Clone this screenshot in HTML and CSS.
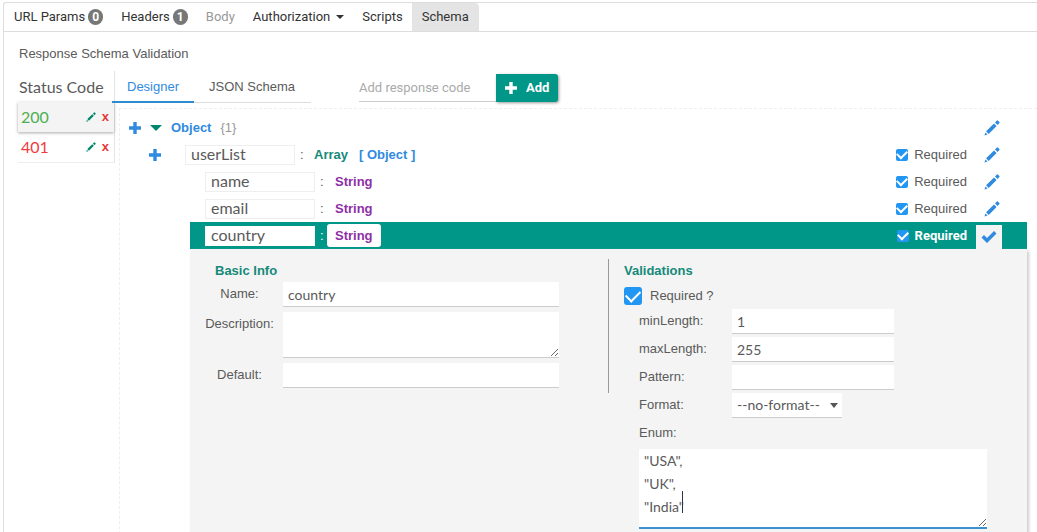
FILE: index.html
```html
<!DOCTYPE html>
<html lang="en">
<head>
<meta charset="utf-8">
<title>Response Schema Validation</title>
<link rel="stylesheet" href="styles.css">
</head>
<body>
<svg class="defs" width="0" height="0" aria-hidden="true">
  <symbol id="pencil" viewBox="0 0 16 16"><path d="M0.5 15.5 1.4 12.4 3.6 14.6ZM2.1 11.3 10 3.4 12.6 6 4.7 13.9ZM11 2.4 12.9.6Q13.4 0 14.1.7L15.3 1.9Q16 2.6 15.4 3.1L13.6 5Z"/></symbol>
  <symbol id="plus" viewBox="0 0 12 12"><path d="M4.3 0h3.4v4.3H12v3.4H7.7V12H4.3V7.7H0V4.3h4.3z"/></symbol>
  <symbol id="check" viewBox="0 0 16 14"><path d="M0.5 7.5 3 5 6 8 13 1 15.5 3.4 6 13z"/></symbol>
</svg>
<main class="panel">
  <nav class="tabs">
    <button class="tab">URL Params <span class="badge">0</span></button>
    <button class="tab">Headers <span class="badge">1</span></button>
    <button class="tab muted">Body</button>
    <button class="tab">Authorization <span class="caret"></span></button>
    <button class="tab">Scripts</button>
    <button class="tab active">Schema</button>
  </nav>
  <h1 class="title">Response Schema Validation</h1>
  <div class="columns">
    <aside class="codes">
      <h2 class="codes-title">Status Code</h2>
      <div class="code ok selected"><span class="num">200</span><button class="mini" aria-label="Edit 200"><svg class="icon-s"><use href="#pencil"/></svg></button><button class="mini del" aria-label="Delete 200">x</button></div>
      <div class="code bad"><span class="num">401</span><button class="mini" aria-label="Edit 401"><svg class="icon-s"><use href="#pencil"/></svg></button><button class="mini del" aria-label="Delete 401">x</button></div>
    </aside>
    <section class="content">
      <div class="toolbar">
        <button class="view current">Designer</button>
        <button class="view">JSON Schema</button>
        <form class="add-form">
          <input class="add-input" type="text" placeholder="Add response code" aria-label="Add response code">
          <button class="add" type="button"><svg class="icon-p"><use href="#plus"/></svg>Add</button>
        </form>
      </div>
      <div class="tree">
        <div class="row root">
          <button class="plain" aria-label="Add property"><svg class="icon-p"><use href="#plus"/></svg></button>
          <button class="plain" aria-label="Collapse"><span class="arrow"></span></button>
          <span class="type blue">Object</span><span class="count">{1}</span>
          <button class="edit" aria-label="Edit root"><svg class="icon"><use href="#pencil"/></svg></button>
        </div>
        <div class="row list">
          <button class="plain" aria-label="Add item property"><svg class="icon-p"><use href="#plus"/></svg></button>
          <input class="key" value="userList" aria-label="Property name"><span class="colon">:</span>
          <span class="type green">Array</span><span class="type blue items">[ Object ]</span>
          <label class="req"><input class="tick" type="checkbox" checked>Required</label>
          <button class="edit" aria-label="Edit userList"><svg class="icon"><use href="#pencil"/></svg></button>
        </div>
        <div class="row leaf">
          <input class="key" value="name" aria-label="Property name"><span class="colon">:</span>
          <span class="type purple">String</span>
          <label class="req"><input class="tick" type="checkbox" checked>Required</label>
          <button class="edit" aria-label="Edit name"><svg class="icon"><use href="#pencil"/></svg></button>
        </div>
        <div class="row leaf">
          <input class="key" value="email" aria-label="Property name"><span class="colon">:</span>
          <span class="type purple">String</span>
          <label class="req"><input class="tick" type="checkbox" checked>Required</label>
          <button class="edit" aria-label="Edit email"><svg class="icon"><use href="#pencil"/></svg></button>
        </div>
        <div class="row leaf open">
          <input class="key" value="country" aria-label="Property name"><span class="colon">:</span>
          <span class="type purple">String</span>
          <label class="req"><input class="tick" type="checkbox" checked>Required</label>
          <button class="edit done" aria-label="Done"><svg class="icon"><use href="#check"/></svg></button>
        </div>
        <div class="details">
          <section class="basic">
            <h3 class="heading">Basic Info</h3>
            <label class="field"><span class="label">Name:</span><input class="box" value="country"></label>
            <label class="field"><span class="label">Description:</span><textarea class="box area"></textarea></label>
            <label class="field"><span class="label">Default:</span><input class="box"></label>
          </section>
          <section class="rules">
            <h3 class="heading">Validations</h3>
            <label class="required"><input class="tick big" type="checkbox" checked>Required ?</label>
            <label class="rule"><span class="name">minLength:</span><input class="box" value="1"></label>
            <label class="rule"><span class="name">maxLength:</span><input class="box" value="255"></label>
            <label class="rule"><span class="name">Pattern:</span><input class="box"></label>
            <label class="rule format"><span class="name">Format:</span><select class="box select"><option>--no-format--</option></select></label>
            <label class="rule" for="enum"><span class="name">Enum:</span></label>
            <div class="enum-wrap">
              <textarea class="box enum" id="enum">"USA",
"UK",
"India"</textarea>
              <span class="cursor"></span>
            </div>
          </section>
        </div>
      </div>
    </section>
  </div>
</main>
</body>
</html>
```

FILE: styles.css
```css
* { box-sizing: border-box; }
body { margin: 0; background: #fff; color: #5a5a5a; font: 13px/18px "Liberation Sans", Arial, sans-serif; overflow: hidden; }
button, input, textarea, select { font: inherit; color: inherit; margin: 0; border: 0; padding: 0; background: none; border-radius: 0; outline: 0; }
button { cursor: pointer; }
h1, h2, h3 { margin: 0; font: inherit; }
svg { display: block; fill: currentColor; }
.defs { position: absolute; }
.panel { margin: 2px 0 0 3px; border: 1px solid #ddd; border-right: 0; border-bottom: 0; border-top-left-radius: 3px; }
.tabs { display: flex; height: 29px; padding-left: 1px; border-bottom: 1px solid #ddd; color: #333; font-family: Roboto, sans-serif; }
.tab { display: flex; align-items: center; gap: 3px; padding: 0 9px; }
.muted { color: #999; }
.active { padding: 0 10px; background: #e4e4e4; border-top-right-radius: 4px; }
.badge { width: 15px; height: 16px; border-radius: 8px; background: #777; color: #fff; font-weight: bold; font-size: 12px; line-height: 16px; }
.caret { border: 4px solid transparent; border-top-color: #333; border-bottom: 0; margin-left: 3px; }
.title { padding: 13px 15px 8px; }
.columns { display: flex; padding-left: 14px; }
.codes { width: 97px; height: 92px; flex: none; border-right: 1px solid #e4e4e4; border-bottom: 1px solid #eee; }
.codes-title { height: 31px; padding: 6px 0 0 1px; font: 16px/20px Lato, sans-serif; }
.code { display: flex; align-items: center; height: 30px; padding: 0 5px 0 3px; gap: 6px; }
.selected { background: #f4f4f4; box-shadow: 0 1px 3px #aaa; }
.num { flex: 1; font: 16px/20px Lato, sans-serif; }
.ok { color: #4caf50; }
.bad { color: #f03c3c; }
.mini { color: #00866f; line-height: 14px; }
.mini.del { color: #e53935; font-weight: bold; }
.icon-s { width: 10px; height: 10px; }
.icon-p { width: 12px; height: 12px; }
.icon { width: 16px; height: 16px; }
.content { flex: 1; min-width: 0; }
.toolbar { display: flex; height: 32px; margin-left: -3px; }
.view { padding: 0 15px; border-bottom: 1px solid #ddd; }
.view:last-of-type { padding-right: 16px; }
.current { color: #2f8ae0; padding-top: 1px; border-bottom: 2px solid #2f8ad0; }
.add-form { display: flex; align-items: flex-end; height: 31px; margin-left: 48px; font-family: Roboto, sans-serif; }
.add-input { width: 137px; height: 28px; border-bottom: 1px solid #ccc; }
.add-input::placeholder { color: #aaa; }
.add { display: flex; align-items: center; gap: 9px; height: 28px; padding: 0 9px; background: #009688; color: #fff; font-weight: bold; border-radius: 0 3px 3px 0; box-shadow: 1px 1px 3px #999; }
.tree { margin: 5px 0 0 4px; padding: 5px 10px 0 0; border: 1px dashed #eee; border-right: 0; border-bottom: 0; }
.row { display: flex; align-items: center; height: 27px; padding-right: 25px; }
.root { padding-left: 9px; gap: 9px; }
.list { padding-left: 29px; }
.leaf { margin-left: 70px; padding-left: 15px; }
.plain { color: #2f8ae0; }
.arrow { display: block; border: 6px solid transparent; border-top: 6px solid #00866f; border-bottom: 0; }
.type { font-weight: bold; }
.blue { color: #2f8ae0; }
.green { color: #16897a; }
.purple { color: #8e2fa6; }
.count { color: #999; }
.key { width: 110px; height: 20px; padding: 0 5px 2px; border: 1px solid #eee; background: #fff; font: 16px/16px Lato, sans-serif; }
.list .key { margin-left: 24px; }
.colon { width: 19px; padding-left: 5px; }
.items { margin-left: 11px; }
.leaf .type { padding: 2px 8px; margin-left: -7px; border-radius: 3px; line-height: 19px; }
.req { display: flex; align-items: center; gap: 6px; margin-left: auto; }
.edit { display: grid; place-items: center; width: 26px; height: 24px; padding-left: 6px; color: #2f8ae0; margin-left: 9px; }
.root .edit { margin-left: auto; }
.tick { appearance: none; width: 12px; height: 12px; border-radius: 2px; background: #2196f3; display: grid; place-items: center; }
.tick::before { content: ""; width: 8px; height: 5px; border: solid #fff; border-width: 0 0 2px 2px; transform: translateY(-1px) rotate(-45deg); }
.big { width: 18px; height: 18px; border-radius: 3px; }
.big::before { width: 12px; height: 7px; }
.open { background: #009688; color: #fff; }
.open .key { color: #5a5a5a; border-color: #fff; }
.open .type { background: #fff; }
.open .req { font-family: Roboto, sans-serif; font-weight: bold; }
.open .done { padding-left: 0; background: #f4f4f4; align-self: flex-end; }
.details { display: flex; margin-left: 70px; padding: 10px 15px 20px; background: #f4f4f4; box-shadow: 2px 2px 3px #ccc; }
.basic { width: 404px; height: 134px; border-right: 1px solid #999; }
.heading { color: #16897a; font-weight: bold; line-height: 23px; }
.basic .heading { padding-left: 10px; }
.field { display: flex; margin-bottom: 5px; }
.label { width: 78px; padding-right: 9px; text-align: center; white-space: nowrap; line-height: 24px; }
.box { display: block; width: 276px; height: 25px; padding: 1px 5px 0; background: #fff; border-bottom: 1px solid #ccc; font: 14px/20px Lato, sans-serif; }
.area { height: 46px; resize: both; }
.rules { flex: 1; padding-left: 15px; }
.required { display: flex; align-items: center; gap: 8px; height: 27px; }
.rule { display: flex; height: 28px; padding-left: 15px; }
.name { width: 93px; line-height: 24px; }
.rule .box { width: 162px; }
.rule .select { width: 110px; appearance: none; padding: 0 5px; }
.format { position: relative; }
.format::after { content: ""; margin: 10px 0 0 -12px; width: 0; height: 0; border: 4px solid transparent; border-top: 5px solid #555; border-bottom: 0; pointer-events: none; }
.enum-wrap { position: relative; margin-left: 15px; }
.enum { width: 348px; height: 80px; padding: 0 5px; line-height: 23px; border-bottom: 2px solid #3b92cf; resize: both; overflow: hidden; }
.cursor { position: absolute; left: 43px; top: 42px; width: 1px; height: 22px; background: #334; }
```
